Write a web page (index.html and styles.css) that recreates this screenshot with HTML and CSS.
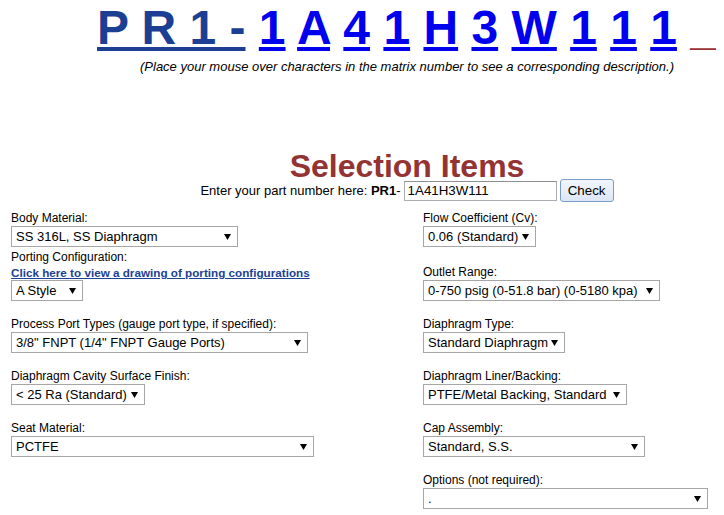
FILE: index.html
```html
<!DOCTYPE html>
<html lang="en">
<head>
  <meta charset="UTF-8" />
  <title>PR1 Series - Selection Items</title>
  <link rel="stylesheet" href="styles.css">
</head>
<body>
  <div class="page">
    <div class="matrix">
      <span class="prefix">P R 1 -</span>
      <a href="#">1</a>
      <a href="#">A</a>
      <a href="#">4</a>
      <a href="#">1</a>
      <a href="#">H</a>
      <a href="#">3</a>
      <a href="#">W</a>
      <a href="#">1</a>
      <a href="#">1</a>
      <a href="#">1</a>
      <span class="tail">_</span>
    </div>
    <p class="hint">(Place your mouse over characters in the matrix number to see a corresponding description.)</p>

    <h1 class="title">Selection Items</h1>

    <form class="part-row">
      <span>Enter your part number here: <b>PR1</b>-</span>
      <input type="text" class="part-input" value="1A41H3W111">
      <button type="button" class="check-btn">Check</button>
    </form>

    <div class="options">
      <div class="row">
        <div class="field">
          <label>Body Material:</label>
          <select class="sel-body"><option>SS 316L, SS Diaphragm</option></select>
        </div>
        <div class="field">
          <label>Flow Coefficient (Cv):</label>
          <select class="sel-flow"><option>0.06 (Standard)</option></select>
        </div>
      </div>

      <div class="row tight">
        <div class="field">
          <label>Porting Configuration:</label>
          <a href="#" class="drawing-link">Click here to view a drawing of porting configurations</a>
          <select class="sel-style"><option>A Style</option></select>
        </div>
        <div class="field">
          <label>Outlet Range:</label>
          <select class="sel-outlet"><option>0-750 psig (0-51.8 bar) (0-5180 kpa)</option></select>
        </div>
      </div>

      <div class="row">
        <div class="field">
          <label>Process Port Types (gauge port type, if specified):</label>
          <select class="sel-port"><option>3/8" FNPT (1/4" FNPT Gauge Ports)</option></select>
        </div>
        <div class="field">
          <label>Diaphragm Type:</label>
          <select class="sel-dtype"><option>Standard Diaphragm</option></select>
        </div>
      </div>

      <div class="row">
        <div class="field">
          <label>Diaphragm Cavity Surface Finish:</label>
          <select class="sel-finish"><option>&lt; 25 Ra (Standard)</option></select>
        </div>
        <div class="field">
          <label>Diaphragm Liner/Backing:</label>
          <select class="sel-liner"><option>PTFE/Metal Backing, Standard</option></select>
        </div>
      </div>

      <div class="row">
        <div class="field">
          <label>Seat Material:</label>
          <select class="sel-seat"><option>PCTFE</option></select>
        </div>
        <div class="field">
          <label>Cap Assembly:</label>
          <select class="sel-cap"><option>Standard, S.S.</option></select>
        </div>
      </div>

      <div class="row">
        <div class="field"></div>
        <div class="field">
          <label>Options (not required):</label>
          <select class="sel-options"><option>.</option></select>
        </div>
      </div>
    </div>
  </div>
</body>
</html>
```

FILE: styles.css
```css
body {
  margin: 0 8px;
  font-family: "Liberation Sans", Arial, sans-serif;
  color: #000;
  background: #fff;
  overflow: hidden;
}

.page {
  width: 798px;
}

/* matrix number */
.matrix {
  text-align: center;
  font-size: 48px;
  font-weight: bold;
  line-height: 55px;
  white-space: nowrap;
}

.matrix .prefix {
  color: #1c3f94;
  text-decoration: underline;
}

.matrix a {
  color: #0000ee;
}

.matrix .tail {
  color: #993333;
}

.hint {
  margin: 4px 0 0;
  text-align: center;
  font-size: 13px;
  font-style: italic;
  line-height: 15px;
}

.title {
  margin: 78px 0 0;
  text-align: center;
  font-size: 32px;
  line-height: 29px;
  color: #933333;
}

/* part number check */
.part-row {
  display: flex;
  justify-content: center;
  align-items: center;
  height: 23px;
  margin: -2px 0 0;
  font-size: 13px;
}

.part-input {
  width: 153px;
  height: 20px;
  box-sizing: border-box;
  margin: 0 0 0 3px;
  padding: 0 3px;
  border: 1px solid #abadb3;
  border-top-color: #8e8f8f;
  font: 13.33px "Liberation Sans", Arial, sans-serif;
}

.check-btn {
  width: 54px;
  height: 23px;
  margin: 0 0 0 3px;
  padding: 0;
  border: 1px solid #7a9cc8;
  border-radius: 3px;
  background: linear-gradient(#f1f6fc, #dce7f5);
  font: 13.33px "Liberation Sans", Arial, sans-serif;
  color: #000;
}

/* selection fields */
.options {
  margin-top: 9px;
  padding-left: 3px;
}

.row {
  display: grid;
  grid-template-columns: 412px 1fr;
  align-items: end;
  margin-top: 16px;
}

.row:first-child {
  margin-top: 0;
}

.row.tight {
  margin-top: 3px;
}

.field {
  display: flex;
  flex-direction: column;
  align-items: flex-start;
}

.field label {
  font-size: 12px;
  line-height: 15px;
}

.drawing-link {
  font-size: 11.7px;
  font-weight: bold;
  line-height: 15px;
  color: #1c4296;
}

.field select {
  -webkit-appearance: none;
  appearance: none;
  height: 21px;
  box-sizing: border-box;
  margin: 0;
  padding: 0 12px 0 4px;
  border: 1px solid #a6a6a6;
  border-radius: 0;
  background: #fff url("data:image/svg+xml,%3Csvg xmlns='http://www.w3.org/2000/svg' width='7' height='6'%3E%3Cpath d='M0 0h7L3.5 6z'/%3E%3C/svg%3E") no-repeat right 6px center;
  font: 13px "Liberation Sans", Arial, sans-serif;
  color: #000;
}

.sel-body { width: 227px; }
.sel-style { width: 72px; }
.sel-port { width: 297px; }
.sel-finish { width: 134px; }
.sel-seat { width: 303px; }
.sel-flow { width: 113px; }
.sel-outlet { width: 237px; }
.sel-dtype { width: 142px; }
.sel-liner { width: 204px; }
.sel-cap { width: 222px; }
.sel-options { width: 285px; }
```
